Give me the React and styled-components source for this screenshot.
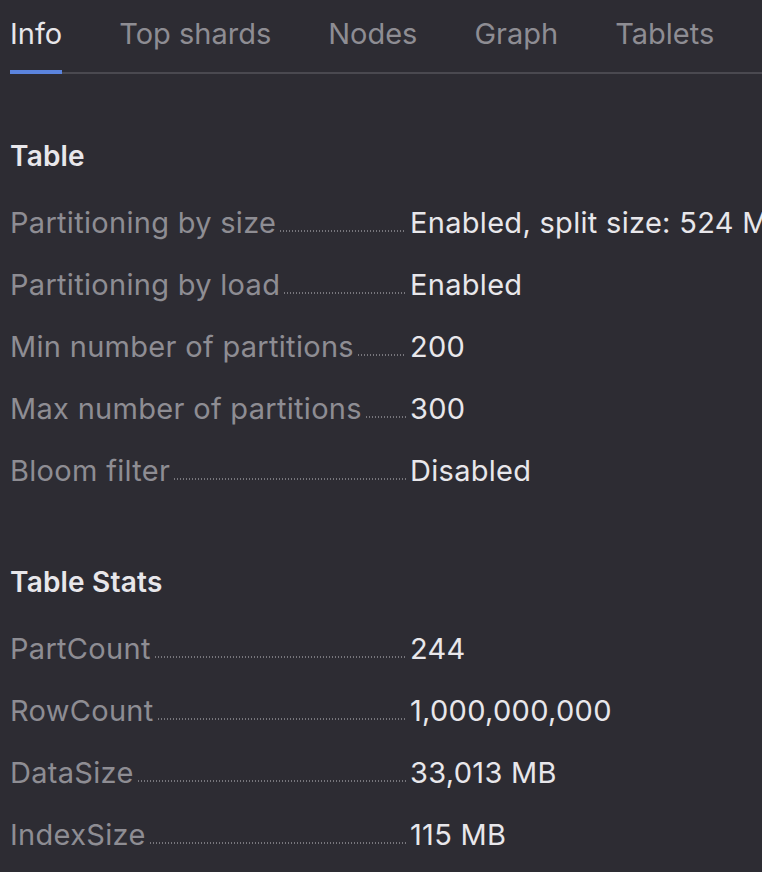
import React from 'react';
import styled, { createGlobalStyle } from 'styled-components';

const GlobalStyle = createGlobalStyle`
    html, body {
        margin: 0;
        padding: 0;
        background-color: #2d2c33;
    }
    body {
        font-family: Inter, "Noto Sans", sans-serif;
        -webkit-font-smoothing: antialiased;
    }
`;

const Page = styled.div`
    width: 762px;
    height: 872px;
    overflow: hidden;
    background-color: #2d2c33;
    padding-left: 10px;
    box-sizing: border-box;
`;

const TabBar = styled.div`
    display: flex;
    gap: 57px;
    height: 74px;
    box-sizing: border-box;
    border-bottom: 2px solid #4a4950;
    white-space: nowrap;
`;

const Tab = styled.div`
    position: relative;
    font-size: 29px;
    line-height: 68px;
    color: ${({ active }) => (active ? '#e7e6ea' : '#8e8d93')};

    &::after {
        content: '';
        position: absolute;
        left: 0;
        right: 0;
        bottom: -2px;
        height: 4px;
        background-color: ${({ active }) => (active ? '#5b84de' : 'transparent')};
    }
`;

const Section = styled.div`
    margin-top: ${({ first }) => (first ? '65px' : '63px')};
`;

const SectionTitle = styled.div`
    font-size: 28px;
    font-weight: 600;
    letter-spacing: 0.2px;
    line-height: 34px;
    color: #e8e7eb;
    margin-bottom: 19px;
`;

const List = styled.div`
    display: flex;
    flex-direction: column;
`;

const Row = styled.div`
    display: flex;
    align-items: baseline;
    height: 62px;
    line-height: 62px;
    font-size: 29px;
    letter-spacing: 0.3px;
    white-space: nowrap;
`;

const Term = styled.div`
    display: flex;
    align-items: baseline;
    flex: 0 0 396px;
    color: #8e8d93;
`;

const Dots = styled.div`
    flex: 1;
    margin-left: 4px;
    height: 2px;
    background-image: linear-gradient(to right, #77767c 0 1.5px, transparent 1.5px 3px);
    background-size: 3px 2px;
    background-repeat: repeat-x;
    transform: translateY(-1px);
`;

const Value = styled.div`
    margin-left: 4px;
    color: #e8e7eb;
`;

const tabs = ['Info', 'Top shards', 'Nodes', 'Graph', 'Tablets'];

const tableProps = [
    ['Partitioning by size', 'Enabled, split size: 524 MB'],
    ['Partitioning by load', 'Enabled'],
    ['Min number of partitions', '200'],
    ['Max number of partitions', '300'],
    ['Bloom filter', 'Disabled'],
];

const tableStats = [
    ['PartCount', '244'],
    ['RowCount', '1,000,000,000'],
    ['DataSize', '33,013 MB'],
    ['IndexSize', '115 MB'],
];

const Info = ({ items }) => (
    <List>
        {items.map(([name, value]) => (
            <Row key={name}>
                <Term>
                    {name}
                    <Dots />
                </Term>
                <Value>{value}</Value>
            </Row>
        ))}
    </List>
);

export default function App() {
    return (
        <Page>
            <GlobalStyle />
            <TabBar>
                {tabs.map((t, i) => (
                    <Tab key={t} active={i === 0}>{t}</Tab>
                ))}
            </TabBar>
            <Section first>
                <SectionTitle>Table</SectionTitle>
                <Info items={tableProps} />
            </Section>
            <Section>
                <SectionTitle>Table Stats</SectionTitle>
                <Info items={tableStats} />
            </Section>
        </Page>
    );
}
